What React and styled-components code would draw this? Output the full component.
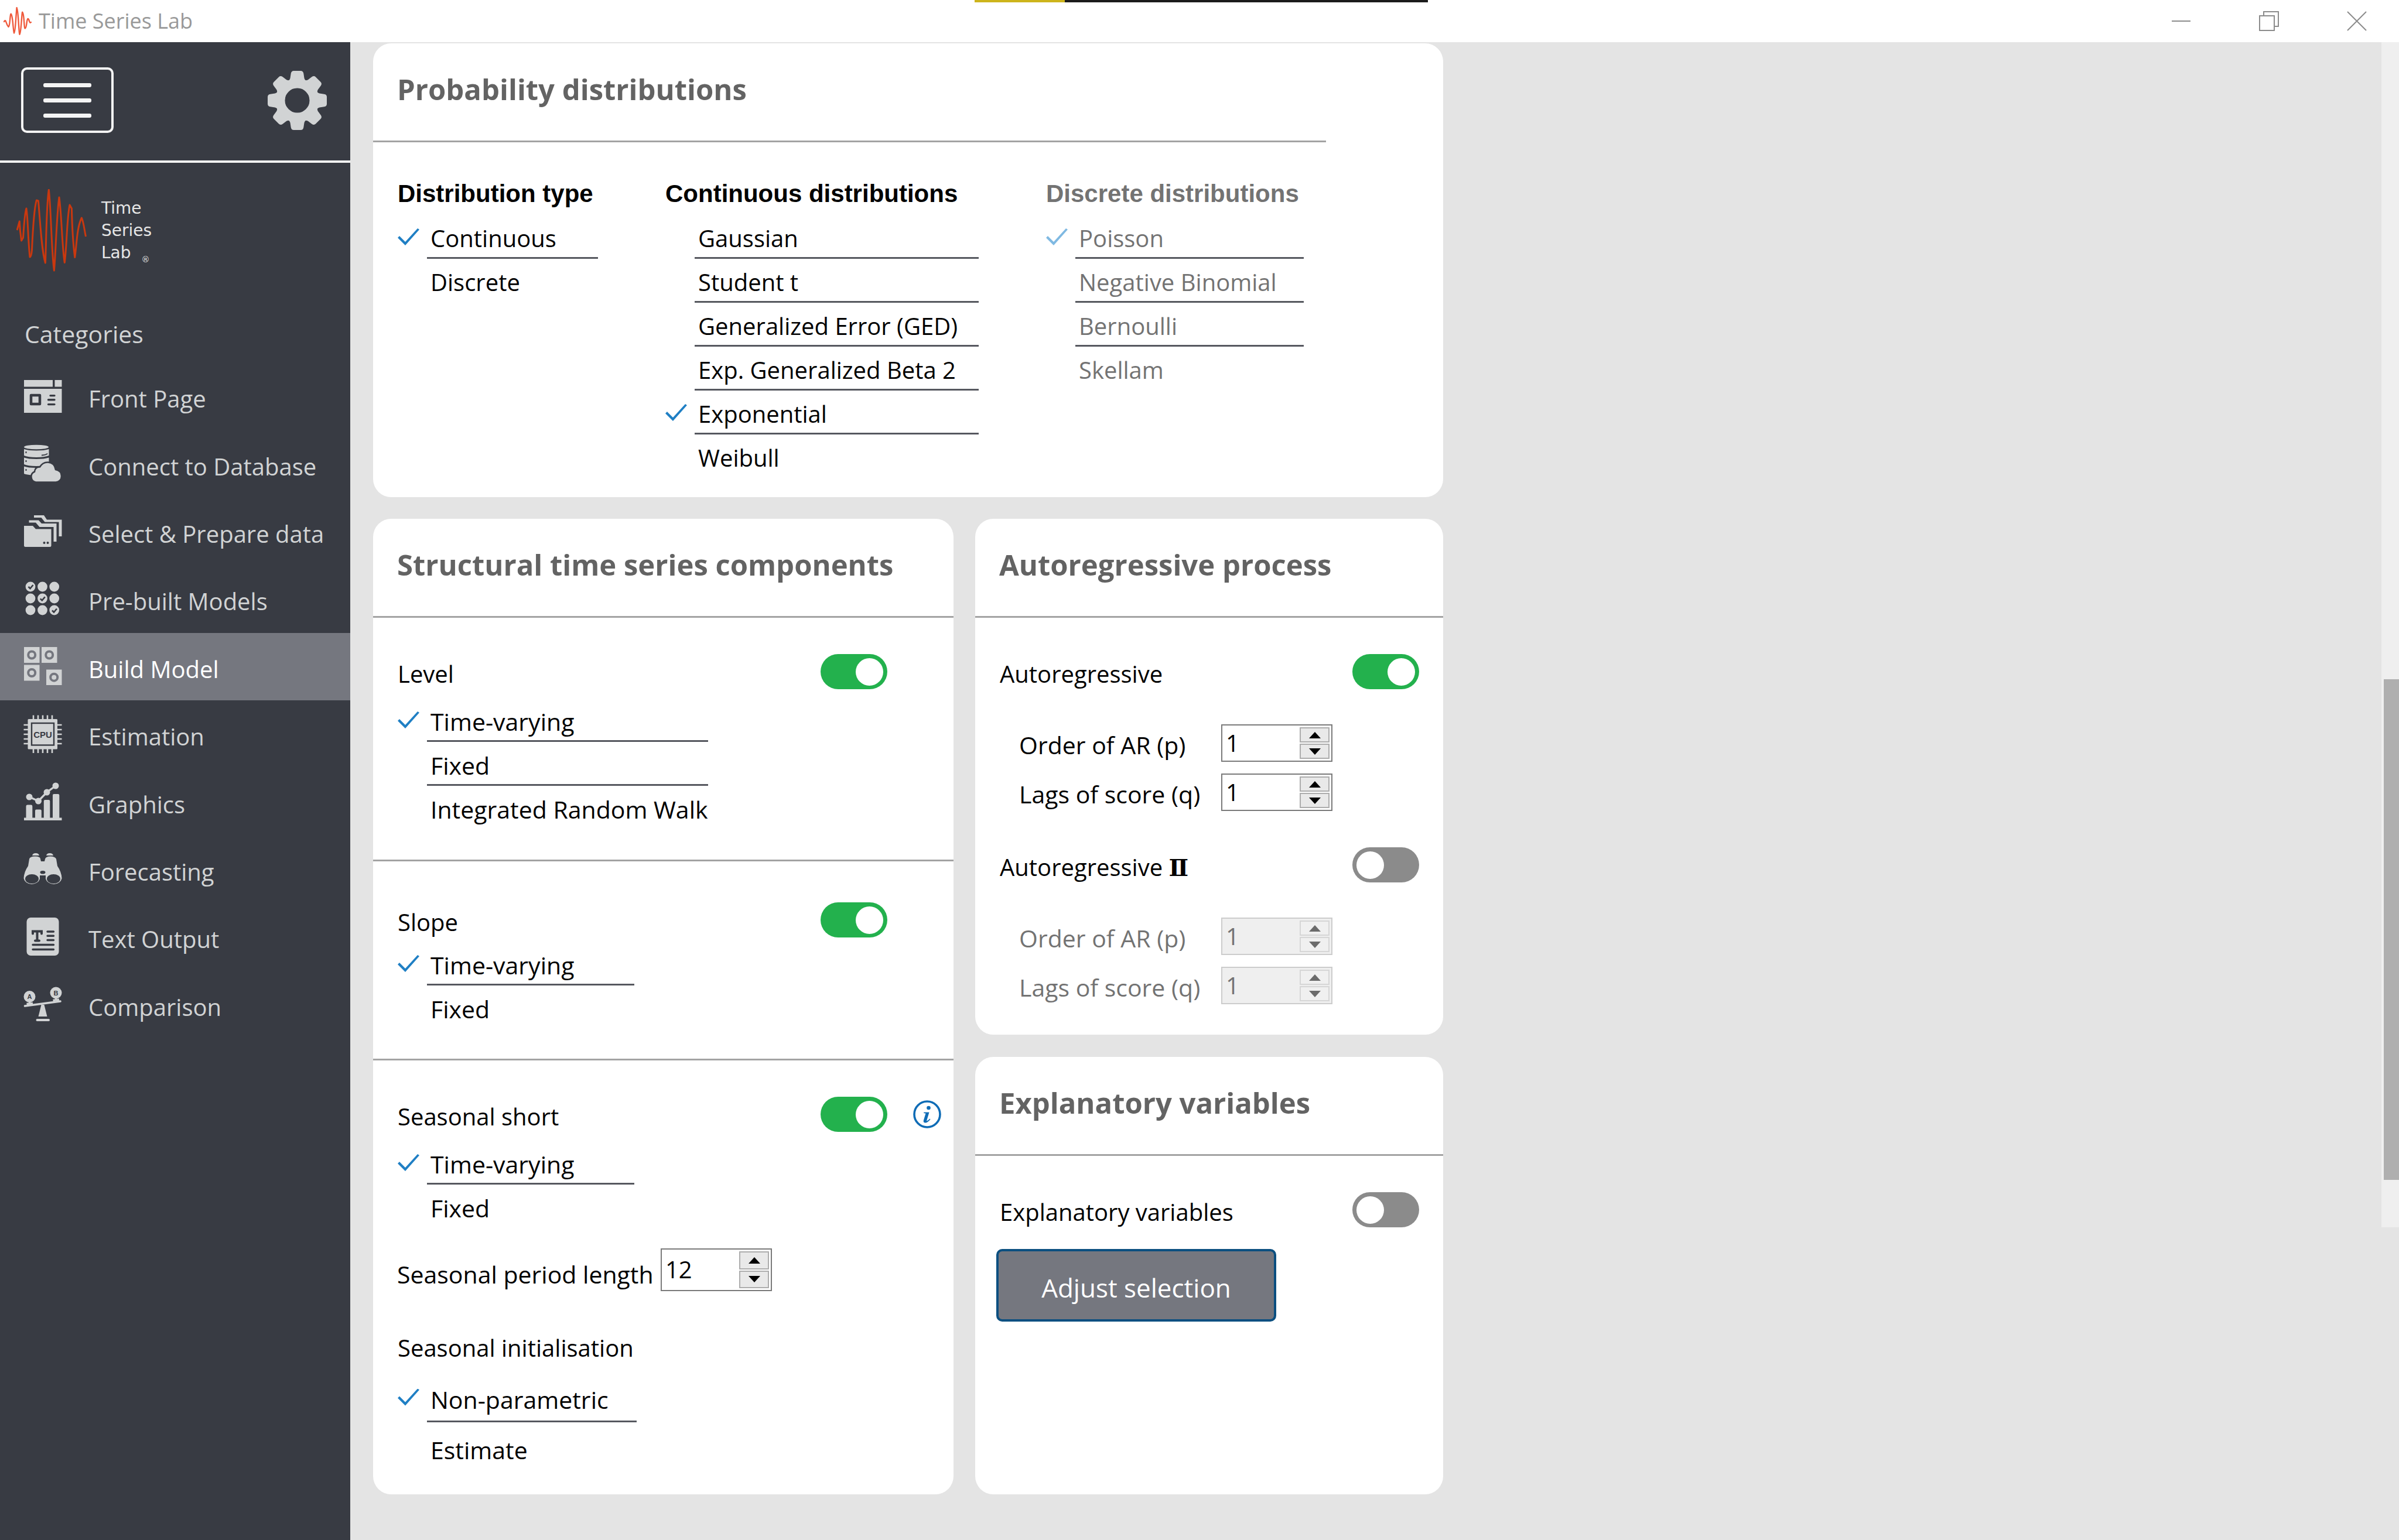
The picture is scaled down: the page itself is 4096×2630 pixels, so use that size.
import React, { useState } from "react";
import styled, { createGlobalStyle, css } from "styled-components";

const color = {
  sidebar: "#383b43",
  active: "#75777f",
  icon: "#d1d3d4",
  page: "#e4e4e4",
  rule: "#a3a3a3",
  underline: "#56585f",
  heading: "#636363",
  muted: "#737373",
  blue: "#1f7fc4",
  green: "#23b14d",
  off: "#8b8b8b",
};

const GlobalStyle = createGlobalStyle`
  *, *::before, *::after { box-sizing: border-box; }
  body {
    margin: 0;
    background: ${color.page};
    color: #000;
    font-family: "Open Sans", "Noto Sans", sans-serif;
    font-size: 40px;
  }
  button, input { font: inherit; color: inherit; margin: 0; }
  h1, h2, h3, p, ul { margin: 0; padding: 0; }
`;

/* ---------- window frame ---------- */

const Window = styled.div`
  display: flex;
  flex-direction: column;
  min-height: 100vh;
`;

const TitleBar = styled.header`
  position: relative;
  display: flex;
  align-items: center;
  height: 72px;
  padding-left: 6px;
  background: #fff;
`;

const AppTitle = styled.h1`
  flex: 1;
  margin-left: 12px;
  font-size: 36px;
  font-weight: 400;
  line-height: 72px;
  color: #999;
`;

const CaptureStrip = styled.div`
  position: absolute;
  top: 0;
  left: 1664px;
  width: 774px;
  height: 4px;
  background: linear-gradient(to right, #cdb41c 154px, #1c1c1c 154px);
`;

const WindowControls = styled.div`
  display: flex;
  gap: 116px;
  padding-right: 55px;
`;

const IconButton = styled.button`
  display: flex;
  padding: 0;
  border: 0;
  background: none;
`;

const Body = styled.div`
  display: flex;
  flex: 1;
`;

/* ---------- sidebar ---------- */

const Sidebar = styled.aside`
  flex: none;
  width: 598px;
  background: ${color.sidebar};
`;

const SidebarTools = styled.div`
  display: flex;
  align-items: center;
  justify-content: space-between;
  height: 206px;
  padding: 0 40px 4px 36px;
  border-bottom: 4px solid #f4f4f4;
`;

const MenuButton = styled.button`
  display: flex;
  flex-direction: column;
  align-items: center;
  justify-content: center;
  gap: 19px;
  width: 158px;
  height: 112px;
  padding: 0;
  border: 4px solid #f4f4f4;
  border-radius: 10px;
  background: none;
`;

const MenuLine = styled.span`
  width: 82px;
  height: 7px;
  border-radius: 3px;
  background: #f4f4f4;
`;

const Brand = styled.div`
  display: flex;
  align-items: center;
  gap: 23px;
  height: 230px;
  padding: 2px 0 0 28px;
`;

const BrandName = styled.p`
  font-family: "DejaVu Sans", sans-serif;
  font-size: 28px;
  line-height: 38px;
  color: #e6e6e6;
`;

const Registered = styled.span`
  margin-left: 18px;
  font-size: 14px;
  line-height: 14px;
  vertical-align: sub;
`;

const NavTitle = styled.h2`
  padding: 32px 0 19px 42px;
  font-size: 41px;
  font-weight: 400;
  line-height: 60px;
  color: ${color.icon};
`;

const NavList = styled.ul`
  display: grid;
  grid-auto-rows: 1fr;
  height: 1154px;
  list-style: none;
`;

const NavItem = styled.li`
  display: flex;
`;

const NavLink = styled.a`
  display: flex;
  flex: 1;
  align-items: center;
  gap: 45px;
  padding-left: 40px;
  font-size: 40px;
  text-decoration: none;
  white-space: nowrap;
  color: ${(p) => (p.$active ? "#fff" : color.icon)};
  background: ${(p) => (p.$active ? color.active : "transparent")};

  svg { flex: none; }
`;

const NavLabel = styled.span`
  padding-top: 8px;
`;

/* ---------- content ---------- */

const Main = styled.main`
  flex: 1;
  padding: 2px 39px 40px;
`;

const Cards = styled.div`
  display: grid;
  grid-template-columns: 991fr 799fr;
  gap: 37px;
  max-width: 1827px;
`;

const Column = styled.div`
  display: flex;
  flex-direction: column;
  gap: 38px;
`;

const Card = styled.section`
  overflow: hidden;
  border-radius: 31px;
  background: #fff;
  ${(p) => p.$wide && css`grid-column: 1 / -1;`}
  ${(p) => p.$grow && css`flex: 1;`}
`;

const CardTitle = styled.h2`
  height: 169px;
  margin-right: ${(p) => (p.$short ? 200 : 0)}px;
  padding: 43px 0 0 41px;
  border-bottom: 3px solid ${color.rule};
  font-size: 49px;
  font-weight: 700;
  line-height: 70px;
  white-space: nowrap;
  color: ${color.heading};
`;

const Distributions = styled.div`
  display: flex;
  gap: 114px;
  padding: 64px 41px 32px;
`;

const Group = styled.fieldset`
  width: ${(p) => p.$width}px;
  min-width: 0;
  margin: 0;
  padding: 0;
  border: 0;
  font-size: ${(p) => p.$size || 41}px;
  color: ${(p) => (p.disabled ? color.muted : "inherit")};
`;

const GroupTitle = styled.legend`
  margin-bottom: 12px;
  padding: 0 0 0 1px;
  font-family: "Liberation Sans", sans-serif;
  font-size: 42px;
  font-weight: 700;
  line-height: 48px;
  white-space: nowrap;
`;

const Option = styled.label`
  display: flex;
  height: ${(p) => (p.$tall ? 86 : 75)}px;

  &:last-child > span { border-color: transparent; }
`;

const Tick = styled.input`
  appearance: none;
  align-self: center;
  flex: none;
  width: 37px;
  height: 29px;
  margin: 0 13px 0 1px;
  clip-path: polygon(0 16px, 3px 13px, 13px 23px, 34px 0, 37px 2px, 13px 29px);

  &:checked { background: ${color.blue}; }
  &:disabled:checked { background: #7fb9e2; }
`;

const OptionText = styled.span`
  flex: 1;
  padding: ${(p) => (p.$tall ? 12 : 8)}px 0 0 6px;
  border-bottom: 3px solid ${color.underline};
  line-height: ${(p) => (p.$tall ? 71 : 64)}px;
  white-space: nowrap;
`;

const Section = styled.div`
  padding: ${(p) => p.$top || 62}px 41px ${(p) => p.$bottom}px;
  border-bottom: ${(p) => (p.$ruled ? 3 : 0)}px solid ${color.rule};
`;

const SwitchRow = styled.div`
  display: flex;
  align-items: flex-start;
  height: 64px;
  margin-top: ${(p) => p.$above || 0}px;
  margin-bottom: ${(p) => p.$space || 0}px;
`;

const SwitchLabel = styled.label`
  flex: 1;
  padding: 4px 0 0 1px;
  line-height: 60px;
  white-space: nowrap;
`;

const Numeral = styled.span`
  font-family: "DejaVu Serif", serif;
  font-weight: 700;
`;

const Switch = styled.input`
  appearance: none;
  flex: none;
  display: flex;
  align-items: center;
  width: 114px;
  height: 60px;
  padding: 0 7px;
  border-radius: 30px;
  background: ${color.off};

  &::before {
    content: "";
    width: 47px;
    height: 47px;
    border-radius: 50%;
    background: #fff;
  }
  &:checked {
    justify-content: flex-end;
    background: ${color.green};
  }
`;

const SwitchAside = styled.div`
  display: flex;
  flex: none;
  align-items: center;
  justify-content: flex-end;
  width: 72px;
  height: 60px;
`;

const InfoSlot = styled(SwitchAside)`
  width: 92px;
  margin-right: -20px;
`;

const Field = styled.div`
  display: flex;
  align-items: flex-end;
  margin-top: ${(p) => p.$space}px;
  padding-left: ${(p) => p.$indent || 0}px;
  color: ${(p) => (p.$disabled ? color.muted : "inherit")};
`;

const FieldLabel = styled.label`
  flex: none;
  width: ${(p) => p.$width}px;
  font-size: 41px;
  line-height: 58px;
  white-space: nowrap;
`;

const SpinBox = styled.div`
  display: flex;
  width: 190px;
  height: ${(p) => (p.$tall ? 73 : 64)}px;
  padding: 3px;
  border: 2px solid ${(p) => (p.$disabled ? "#cccccc" : "#7a7a7a")};
  background: ${(p) => (p.$disabled ? "#efefef" : "#fff")};
`;

const SpinInput = styled.input`
  flex: 1;
  min-width: 0;
  padding: 0 0 2px 3px;
  border: 0;
  outline: 0;
  background: none;
`;

const SpinButtons = styled.div`
  display: flex;
  flex-direction: column;
  gap: 2px;
  width: 51px;
`;

const SpinButton = styled.button`
  display: flex;
  flex: 1;
  align-items: center;
  justify-content: center;
  min-height: 0;
  padding: 0;
  border: 2px solid ${(p) => (p.disabled ? "#d6d6d6" : "#adadad")};
  background: ${(p) => (p.disabled ? "#f0f0f0" : "#e9e9e9")};
  color: ${(p) => (p.disabled ? "#6b6b6b" : "#000")};
`;

const SubHeading = styled.h3`
  margin: 66px 0 12px;
  padding: 2px 0 0 1px;
  font-size: 40px;
  font-weight: 400;
  line-height: 58px;
`;

const Actions = styled.div`
  padding: 33px 36px;
`;

const PrimaryButton = styled.button`
  width: 478px;
  height: 124px;
  padding: 8px 0 0;
  border: 4px solid #0b4f80;
  border-radius: 10px;
  background: ${color.active};
  color: #fff;
  font-size: 44px;
`;

/* ---------- scroll bar ---------- */

const ScrollTrack = styled.div`
  flex: none;
  width: 30px;
  height: 2024px;
  padding: 1088px 0 0 4px;
  background: #efefef;
`;

const ScrollThumb = styled.div`
  height: 855px;
  background: #afafaf;
`;

/* ---------- drawings ---------- */

const SmallWave = () => (
  <svg width="48" height="48" viewBox="0 0 48 48" fill="none" stroke="#ef5a3c" strokeWidth="2.4" strokeLinejoin="round" strokeLinecap="round" aria-hidden="true">
    <path d="M1 25Q3 21 4.500 26T8.600 34Q10 34 11 22T13 12Q14.500 12 16 28T18 44.600Q19.500 44 21 22T22.700 1Q24 1 25.500 24T27.300 47Q29 46 30.500 26T32.300 9Q34 9 35 24T37 36Q38.500 36 39.500 28T41.500 20Q43 20 44 24T47 26" />
  </svg>
);

const BrandWave = () => (
  <svg width="122" height="142" viewBox="0 0 122 142" fill="none" stroke="#c9380f" strokeWidth="3" strokeLinejoin="round" aria-hidden="true">
    <path d="M1.100 70L5.300 55L6.500 72L8.600 88L11.500 83C13 60 14 42 17 33C20 55 20 90 23 116C25 116 26 110 26.500 104C28 70 31 30 34.400 19L37.400 20C41 60 43 105 49.400 126C51 90 51 30 55.300 1C59 30 60 110 64.400 139C67 110 69 40 73 14C77 40 78 100 82.300 125.600C86 100 86 50 91 27L94.400 33C95 60 97 95 99.800 116.600C103 95 103 66 111.400 49C115 57 116 70 118.500 81" />
  </svg>
);

const Gear = () => (
  <svg width="101" height="101" viewBox="-50.5 -50.5 101 101" aria-hidden="true">
    <g fill={color.icon}>
      {[0, 45, 90, 135, 180, 225, 270, 315].map((a) => (
        <path key={a} transform={`rotate(${a})`} d="M-6-50.500H6Q10-50.500 10.800-46L12-38Q13-34 18-32V-20H-18V-32Q-13-34-12-38L-10.800-46Q-10-50.500-6-50.500Z" />
      ))}
      <path fillRule="evenodd" d="M0-37A37 37 0 1 1 0 37A37 37 0 1 1 0-37ZM0-21A21 21 0 1 0 0 21A21 21 0 1 0 0-21Z" />
    </g>
    <circle r="21" fill={color.sidebar} />
  </svg>
);

const NavIcon = ({ children }) => (
  <svg width="66" height="66" viewBox="0 0 66 66" fill={color.icon} aria-hidden="true">{children}</svg>
);

const dark = color.sidebar;

const icons = {
  front: (
    <NavIcon>
      <path d="M1 5H50V16.500H1ZM53.500 5H65.500V16.500H53.500ZM1 20H65.500V61H1Z" />
      <rect x="13" y="31" width="15" height="15" fill="none" stroke={dark} strokeWidth="4.500" strokeLinejoin="round" />
      <path d="M46 31.600H53M42.500 38.700H53M42.500 46.600H53" stroke={dark} strokeWidth="3.400" strokeLinecap="round" />
    </NavIcon>
  ),
  database: (
    <NavIcon>
      <ellipse cx="22" cy="4.500" rx="21" ry="3.800" />
      <path d="M1 8Q8 10.500 22 10.500T43.500 8V19Q36 22 22 22T1 19ZM1 22.500Q8 25 22 25T43.500 22.500V34Q36 37 22 37T1 34ZM1 37.500Q8 40 22 40T30 40V53Q8 53 1 50Z" />
      <path d="M31 18.500Q39 18 41 15.500" stroke={dark} strokeWidth="2" fill="none" />
      <path d="M4.500 12V15M4.500 27V30M4.500 42V45" stroke={dark} strokeWidth="2" />
      <path d="M21 64.500A9.500 9.500 0 0 1 19 46.500Q20 38 28 38.500Q33 30 42 30.500Q53 31 55 43Q65 45 65 54T55.500 64.500Z" stroke={dark} strokeWidth="2.600" />
    </NavIcon>
  ),
  folders: (
    <NavIcon>
      <path d="M1 24H16L21 29.500H47.500V57.500Q47.500 60 45 60H3.500Q1 60 1 57.500Z" />
      <path d="M9.500 18.500V14.600H26L31 20H56.500V51H51.500V26H27.500L21 18.500Z" />
      <path d="M18 10V6H35L40 13.500H65.500V42H60.500V17.500H36.500L30.500 10Z" />
      <circle cx="35.500" cy="53" r="2" fill={dark} />
      <circle cx="41.500" cy="53" r="2" fill={dark} />
    </NavIcon>
  ),
  dots: (
    <NavIcon>
      {[12, 32, 52].map((y) => [12, 32.5, 52.7].map((x) => <circle key={x + "-" + y} cx={x} cy={y} r="8.400" />))}
      {[12, 32.3, 52.5].map((c) => (
        <path key={c} d={`M${c - 3.5} ${c}l3 3l5-6`} fill="none" stroke={dark} strokeWidth="2.600" />
      ))}
    </NavIcon>
  ),
  blocks: (
    <NavIcon>
      <path d="M1 0H27.500V27H1ZM31 0H57.500V27H31ZM1 30.500H27.500V57.500H1ZM39 38.500H65.500V65H39Z" />
      <g fill="none" stroke={color.active} strokeWidth="4">
        <circle cx="14.200" cy="13.500" r="6" />
        <circle cx="44.200" cy="13.500" r="6" />
        <circle cx="14.200" cy="44" r="6" />
        <circle cx="52.200" cy="51.700" r="6" />
      </g>
    </NavIcon>
  ),
  cpu: (
    <NavIcon>
      <path d="M17 .5V65M25 .5V65M33 .5V65M41 .5V65M49 .5V65M.5 17H65.500M.5 25H65.500M.5 33H65.500M.5 41H65.500M.5 49H65.500" stroke={color.icon} strokeWidth="2.600" />
      <rect x="7.500" y="7" width="50.500" height="51.500" rx="1.500" />
      <rect x="14" y="14" width="38" height="37.500" fill="none" stroke={dark} strokeWidth="2.400" />
      <text x="33" y="38.500" textAnchor="middle" fontFamily="Liberation Sans" fontSize="15" fontWeight="700" fill={dark}>CPU</text>
    </NavIcon>
  ),
  chart: (
    <NavIcon>
      <path d="M1 60.500H4.500V41Q4.500 38.600 7 38.600H13Q15.300 38.600 15.300 41V60.500H20V48.500Q20 46.500 22 46.500H28.500Q30.800 46.500 30.800 48.500V60.500H34.800V32Q34.800 30 37 30H43Q45.300 30 45.300 32V60.500H50V22Q50 20 52 20H59Q61.300 20 61.300 22V60.500H65.500V65H1Z" />
      <path d="M10 25L25.500 32L40 17L55 6" fill="none" stroke={color.icon} strokeWidth="3.400" />
      <circle cx="10" cy="25" r="5.500" /><circle cx="25.500" cy="32" r="5.500" /><circle cx="40" cy="17" r="5.500" /><circle cx="55" cy="6" r="5.500" />
    </NavIcon>
  ),
  binoculars: (
    <NavIcon>
      <path d="M15 10Q16 6 21 6T27 10ZM39 10Q40 6 45 6T51 10Z" />
      <path fillRule="evenodd" d="M10 16Q11 11.500 20 11.500T29 16L30 20H36L37 16Q38 11.500 46 11.500T56 16L58 28Q65 38 65.500 49A14 11.500 0 0 1 38 50V44H28V50A14 11.500 0 0 1 .5 49Q1 38 8 28ZM14.500 42A11.500 8 0 1 0 14.500 58A11.500 8 0 1 0 14.500 42ZM51.500 42A11.500 8 0 1 0 51.500 58A11.500 8 0 1 0 51.500 42ZM33 36A4.500 2.800 0 1 0 33 41.600A4.500 2.800 0 1 0 33 36Z" />
    </NavIcon>
  ),
  text: (
    <NavIcon>
      <rect x="5.500" y="0" width="55" height="65" rx="7" />
      <path d="M16 27.500V23.500H31V27.500M23.500 23.500V39M20 39.500H27" fill="none" stroke={dark} strokeWidth="4" strokeLinecap="round" />
      <path d="M41 24H51.500M41 31.300H51.500M41 38.500H51.500M16 46.500H51.500M16 54.500H51.500" stroke={dark} strokeWidth="3.400" strokeLinecap="round" />
    </NavIcon>
  ),
  scales: (
    <NavIcon>
      <path d="M2.500 36L63 28" stroke={color.icon} strokeWidth="3.600" strokeLinecap="round" />
      <path d="M10.500 28V33M5.500 32.500L16 31.500M55.500 22V27M50.500 26.500L61 25" stroke={color.icon} strokeWidth="3.400" />
      <circle cx="10.500" cy="20" r="10" /><circle cx="55.500" cy="13.500" r="10" />
      <path d="M30.500 34H35.500L40.500 54H25.500Z" />
      <path d="M23.500 60H43" stroke={color.icon} strokeWidth="4" strokeLinecap="round" />
      <text x="10.500" y="24" textAnchor="middle" fontFamily="Liberation Sans" fontSize="11" fontWeight="700" fill={dark}>A</text>
      <text x="55.500" y="17.500" textAnchor="middle" fontFamily="Liberation Sans" fontSize="11" fontWeight="700" fill={dark}>B</text>
    </NavIcon>
  ),
};

const InfoIcon = () => (
  <svg width="48" height="48" viewBox="0 0 48 48" role="img" aria-label="Information">
    <circle cx="24" cy="24" r="22" fill="none" stroke="#0f6cb6" strokeWidth="3.600" />
    <circle cx="26.500" cy="13" r="3.300" fill="#0f6cb6" />
    <path d="M18.500 20.500H27.500L23 35.500Q25.500 35 28.500 31.500L29.500 32.500Q25 38.500 20.500 38.500Q16.800 38 18 34L21.500 22.500L18 22Z" fill="#0f6cb6" />
  </svg>
);

const Arrow = ({ down }) => (
  <svg width="20" height="11" viewBox="0 0 20 11" aria-hidden="true">
    <path d={down ? "M0 0H20L10 11Z" : "M0 11H20L10 0Z"} fill="currentColor" />
  </svg>
);

const WindowGlyph = ({ d }) => (
  <svg width="34" height="34" viewBox="0 0 34 34" fill="none" stroke="#8c8c8c" strokeWidth="2" aria-hidden="true">
    <path d={d} />
  </svg>
);

/* ---------- parts ---------- */

function Options({ name, items, selected, tall }) {
  const [value, setValue] = useState(selected);
  return items.map((item) => (
    <Option key={item} $tall={tall}>
      <Tick type="radio" name={name} checked={value === item} onChange={() => setValue(item)} />
      <OptionText $tall={tall}>{item}</OptionText>
    </Option>
  ));
}

function Toggle({ id, label, on, above, space, children }) {
  const [checked, setChecked] = useState(Boolean(on));
  return (
    <SwitchRow $above={above} $space={space}>
      <SwitchLabel htmlFor={id}>{label}</SwitchLabel>
      <Switch id={id} type="checkbox" role="switch" checked={checked} onChange={() => setChecked(!checked)} />
      {children}
    </SwitchRow>
  );
}

function Spinner({ id, label, initial, labelWidth, indent, space, tall, disabled }) {
  const [value, setValue] = useState(initial);
  return (
    <Field $space={space} $indent={indent} $disabled={disabled}>
      <FieldLabel htmlFor={id} $width={labelWidth}>{label}</FieldLabel>
      <SpinBox $tall={tall} $disabled={disabled}>
        <SpinInput id={id} inputMode="numeric" value={value} disabled={disabled} onChange={(e) => setValue(Number(e.target.value) || 0)} />
        <SpinButtons>
          <SpinButton type="button" aria-label={`Increase ${label}`} disabled={disabled} onClick={() => setValue(value + 1)}><Arrow /></SpinButton>
          <SpinButton type="button" aria-label={`Decrease ${label}`} disabled={disabled} onClick={() => setValue(value - 1)}><Arrow down /></SpinButton>
        </SpinButtons>
      </SpinBox>
    </Field>
  );
}

const nav = [
  ["Front Page", "front"],
  ["Connect to Database", "database"],
  ["Select & Prepare data", "folders"],
  ["Pre-built Models", "dots"],
  ["Build Model", "blocks"],
  ["Estimation", "cpu"],
  ["Graphics", "chart"],
  ["Forecasting", "binoculars"],
  ["Text Output", "text"],
  ["Comparison", "scales"],
];

export default function App() {
  return (
    <Window>
      <GlobalStyle />
      <TitleBar>
        <SmallWave />
        <AppTitle>Time Series Lab</AppTitle>
        <CaptureStrip />
        <WindowControls>
          <IconButton type="button" aria-label="Minimize"><WindowGlyph d="M1 17H33" /></IconButton>
          <IconButton type="button" aria-label="Restore"><WindowGlyph d="M1 8H26V33H1ZM8 8V1H33V26H26" /></IconButton>
          <IconButton type="button" aria-label="Close"><WindowGlyph d="M1 1L33 33M33 1L1 33" /></IconButton>
        </WindowControls>
      </TitleBar>

      <Body>
        <Sidebar>
          <SidebarTools>
            <MenuButton type="button" aria-label="Menu"><MenuLine /><MenuLine /><MenuLine /></MenuButton>
            <IconButton type="button" aria-label="Settings"><Gear /></IconButton>
          </SidebarTools>
          <Brand>
            <BrandWave />
            <BrandName>Time<br />Series<br />Lab<Registered>®</Registered></BrandName>
          </Brand>
          <nav aria-label="Categories">
            <NavTitle>Categories</NavTitle>
            <NavList>
              {nav.map(([label, icon]) => {
                const active = label === "Build Model";
                return (
                  <NavItem key={label}>
                    <NavLink href="#" $active={active} aria-current={active ? "page" : undefined}>
                      {icons[icon]}
                      <NavLabel>{label}</NavLabel>
                    </NavLink>
                  </NavItem>
                );
              })}
            </NavList>
          </nav>
        </Sidebar>

        <Main>
          <Cards>
            <Card $wide>
              <CardTitle $short>Probability distributions</CardTitle>
              <Distributions>
                <Group $width={343} $size={40}>
                  <GroupTitle>Distribution type</GroupTitle>
                  <Options name="type" selected="Continuous" items={["Continuous", "Discrete"]} />
                </Group>
                <Group $width={536} $size={40}>
                  <GroupTitle>Continuous distributions</GroupTitle>
                  <Options
                    name="continuous"
                    selected="Exponential"
                    items={["Gaussian", "Student t", "Generalized Error (GED)", "Exp. Generalized Beta 2", "Exponential", "Weibull"]}
                  />
                </Group>
                <Group $width={441} $size={40} disabled>
                  <GroupTitle>Discrete distributions</GroupTitle>
                  <Options name="discrete" selected="Poisson" items={["Poisson", "Negative Binomial", "Bernoulli", "Skellam"]} />
                </Group>
              </Distributions>
            </Card>

            <Card>
              <CardTitle>Structural time series components</CardTitle>
              <Section $bottom={51} $ruled>
                <Toggle id="level" label="Level" on space={11}><SwitchAside /></Toggle>
                <Group $width={531}>
                  <Options name="level-mode" selected="Time-varying" items={["Time-varying", "Fixed", "Integrated Random Walk"]} />
                </Group>
              </Section>
              <Section $top={70} $bottom={50} $ruled>
                <Toggle id="slope" label="Slope" on space={3}><SwitchAside /></Toggle>
                <Group $width={405}>
                  <Options name="slope-mode" selected="Time-varying" items={["Time-varying", "Fixed"]} />
                </Group>
              </Section>
              <Section $bottom={37}>
                <Toggle id="seasonal" label="Seasonal short" on space={11}><InfoSlot><InfoIcon /></InfoSlot></Toggle>
                <Group $width={405}>
                  <Options name="seasonal-mode" selected="Time-varying" items={["Time-varying", "Fixed"]} />
                </Group>
                <Spinner id="period" label="Seasonal period length" initial={12} labelWidth={450} space={34} tall />
                <SubHeading>Seasonal initialisation</SubHeading>
                <Group $width={409}>
                  <Options name="seasonal-init" selected="Non-parametric" items={["Non-parametric", "Estimate"]} tall />
                </Group>
              </Section>
            </Card>

            <Column>
              <Card>
                <CardTitle>Autoregressive process</CardTitle>
                <Section $bottom={52}>
                  <Toggle id="ar" label="Autoregressive" on />
                  <Spinner id="ar-order" label="Order of AR (p)" initial={1} labelWidth={345} indent={34} space={56} />
                  <Spinner id="ar-lags" label="Lags of score (q)" initial={1} labelWidth={345} indent={34} space={20} />
                  <Toggle id="ar2" label={<>Autoregressive <Numeral>Ⅱ</Numeral></>} above={62} />
                  <Spinner id="ar2-order" label="Order of AR (p)" initial={1} labelWidth={345} indent={34} space={56} disabled />
                  <Spinner id="ar2-lags" label="Lags of score (q)" initial={1} labelWidth={345} indent={34} space={20} disabled />
                </Section>
              </Card>
              <Card $grow>
                <CardTitle>Explanatory variables</CardTitle>
                <Section $bottom={0}>
                  <Toggle id="explanatory" label="Explanatory variables" />
                </Section>
                <Actions>
                  <PrimaryButton type="button">Adjust selection</PrimaryButton>
                </Actions>
              </Card>
            </Column>
          </Cards>
        </Main>
        <ScrollTrack><ScrollThumb /></ScrollTrack>
      </Body>
    </Window>
  );
}
